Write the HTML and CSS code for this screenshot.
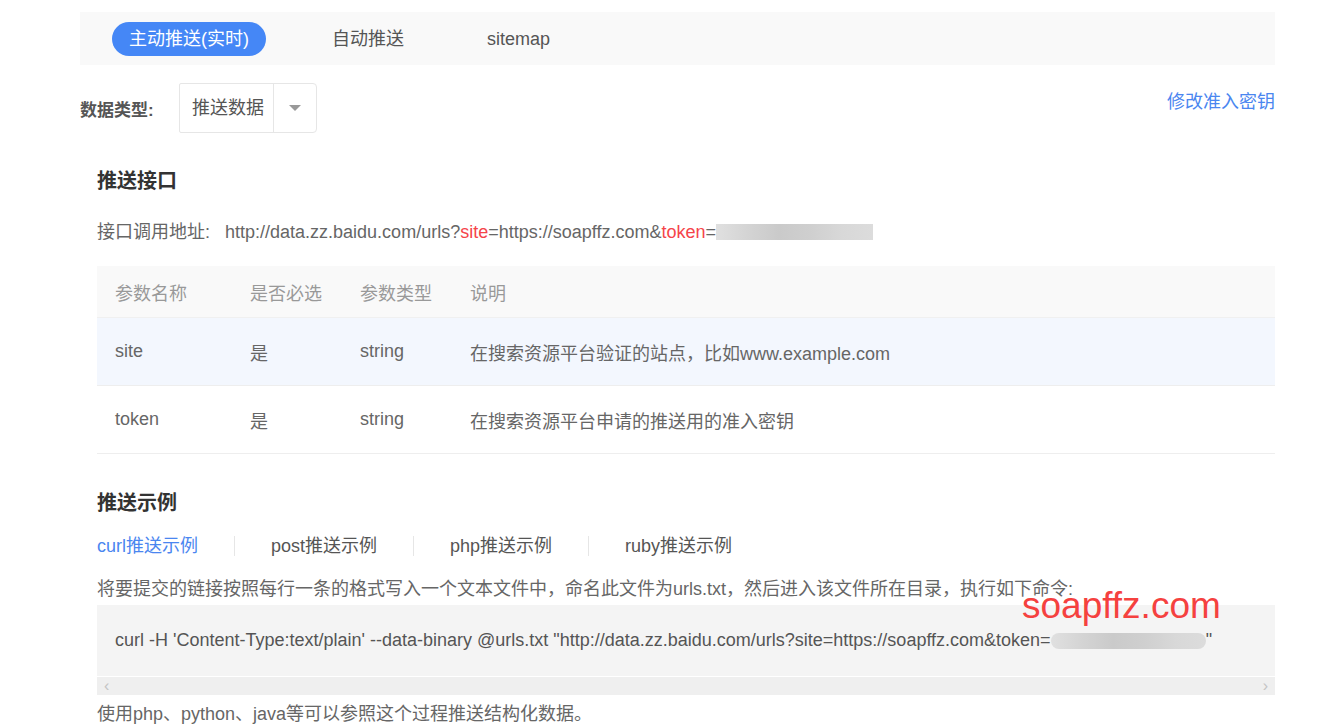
FILE: index.html
```html
<!DOCTYPE html>
<html lang="zh-CN">
<head>
<meta charset="utf-8">
<title>主动推送</title>
<link rel="stylesheet" href="styles.css">
</head>
<body>
<div class="page">
  <div class="topbar">
    <span class="top-tab active">主动推送(实时)</span>
    <span class="top-tab">自动推送</span>
    <span class="top-tab">sitemap</span>
  </div>

  <div class="type-row">
    <div class="type-left">
      <span class="type-label">数据类型:</span>
      <div class="select">
        <span class="select-text">推送数据</span>
        <span class="select-arrow"><span class="tri"></span></span>
      </div>
    </div>
    <a class="key-link">修改准入密钥</a>
  </div>

  <div class="section">
    <h2 class="sec-title">推送接口</h2>
    <p class="url-line">接口调用地址: <span class="url">http://data.zz.baidu.com/urls?<span class="red">site</span>=https://soapffz.com&amp;<span class="red">token</span>=<span class="mask"></span></span></p>

    <div class="table">
      <div class="tr th">
        <div class="td">参数名称</div>
        <div class="td">是否必选</div>
        <div class="td">参数类型</div>
        <div class="td">说明</div>
      </div>
      <div class="tr hl">
        <div class="td">site</div>
        <div class="td">是</div>
        <div class="td">string</div>
        <div class="td">在搜索资源平台验证的站点，比如www.example.com</div>
      </div>
      <div class="tr">
        <div class="td">token</div>
        <div class="td">是</div>
        <div class="td">string</div>
        <div class="td">在搜索资源平台申请的推送用的准入密钥</div>
      </div>
    </div>

    <h2 class="sec-title sec2">推送示例</h2>
    <div class="code-tabs">
      <span class="ctab on">curl推送示例</span>
      <span class="ctab">post推送示例</span>
      <span class="ctab">php推送示例</span>
      <span class="ctab">ruby推送示例</span>
    </div>
    <p class="desc">将要提交的链接按照每行一条的格式写入一个文本文件中，命名此文件为urls.txt，然后进入该文件所在目录，执行如下命令:</p>
    <div class="code">
      <div class="code-line">curl -H 'Content-Type:text/plain' --data-binary @urls.txt "http://data.zz.baidu.com/urls?site=https://soapffz.com&amp;token=<span class="mask mask2"></span>"</div>
      <div class="scrollbar">
        <span class="sarrow">&#8249;</span>
        <span class="sarrow">&#8250;</span>
      </div>
    </div>
    <p class="desc last">使用php、python、java等可以参照这个过程推送结构化数据。</p>
  </div>
  <div class="watermark">soapffz.com</div>
</div>
</body>
</html>
```
FILE: styles.css
```css
* { box-sizing: border-box; }
html, body { margin: 0; padding: 0; background: #fff; }
body {
  font-family: "Liberation Sans", "Noto Sans CJK SC", sans-serif;
  font-size: 18px;
  color: #666;
}
.page {
  position: relative;
  margin-left: 80px;
  width: 1195px;
  padding-top: 12px;
}
.topbar {
  height: 53px;
  background: #f9f9f9;
  display: flex;
  align-items: center;
  padding-left: 32px;
  gap: 49px;
}
.top-tab {
  height: 34px;
  line-height: 34px;
  padding: 0 17px;
  border-radius: 17px;
  color: #555;
  font-size: 18px;
}
.top-tab.active {
  background: #4587f6;
  color: #fff;
}
.type-row {
  margin-top: 18px;
  display: flex;
  justify-content: space-between;
  align-items: flex-start;
}
.type-left {
  display: flex;
  align-items: center;
}
.type-label {
  font-weight: bold;
  color: #555;
  width: 99px;
  font-size: 17px;
  padding-top: 1px;
}
.select {
  display: flex;
  height: 50px;
  width: 138px;
  border: 1px solid #e6e6e6;
  border-radius: 2px 4px 4px 2px;
}
.select-text {
  width: 94px;
  padding-left: 12px;
  line-height: 48px;
  overflow: hidden;
  white-space: nowrap;
  color: #555;
  border-right: 1px solid #e6e6e6;
}
.select-arrow {
  flex: 1;
  display: flex;
  align-items: center;
  justify-content: center;
}
.tri {
  width: 0; height: 0;
  border-left: 6px solid transparent;
  border-right: 6px solid transparent;
  border-top: 6px solid #999;
}
.key-link {
  color: #4a86f0;
  line-height: 24px;
  margin-top: 7px;
  cursor: pointer;
}
.section {
  padding-left: 17px;
}
.sec-title {
  margin: 34px 0 0;
  font-size: 20px;
  line-height: 28px;
  color: #333;
  font-weight: bold;
}
.url-line {
  margin: 25px 0 0;
  line-height: 24px;
}
.url { margin-left: 10px; }
.red { color: #f5444a; }
.mask {
  display: inline-block;
  width: 157px;
  height: 16px;
  vertical-align: -2px;
  background: linear-gradient(90deg, #e0e0e0 0%, #d4d4d4 20%, #cacaca 40%, #cfcfcf 60%, #d8d8d8 80%, #dcdcdc 100%);
}
.table {
  margin-top: 22px;
}
.tr {
  display: grid;
  grid-template-columns: 135px 110px 110px 1fr;
  height: 68px;
  align-items: center;
  border-bottom: 1px solid #eee;
}
.tr.th {
  height: 52px;
  background: #f9f9f9;
  color: #999;
  border-bottom: 1px solid #f0f0f0;
}
.tr.hl { background: #f3f7fe; }
.td {
  padding-left: 18px;
  white-space: nowrap;
}
.sec2 { margin-top: 35px; }
.code-tabs {
  margin-top: 19px;
  display: flex;
  align-items: center;
  line-height: 24px;
}
.ctab {
  padding: 0 36px;
  border-left: 1px solid #e6e6e6;
  line-height: 20px;
  color: #555;
}
.ctab:first-child { padding-left: 0; border-left: none; }
.ctab.on { color: #4a86f0; }
.desc {
  margin: 21px 0 0;
  line-height: 24px;
}
.code {
  margin-top: 4px;
  background: #f4f4f4;
}
.code-line {
  height: 71px;
  line-height: 71px;
  padding-left: 18px;
  white-space: nowrap;
  overflow: hidden;
  color: #555;
}
.mask2 {
  width: 155px;
  border-radius: 8px;
  vertical-align: -3px;
}
.scrollbar {
  height: 19px;
  border-top: 1px solid #fff;
  background: #efefef;
  display: flex;
  justify-content: space-between;
  align-items: center;
  padding: 0 7px 0 7px;
  color: #c4c4c4;
  font-size: 16px;
  line-height: 18px;
}
.desc.last {
  margin-top: 7px;
}
.watermark {
  position: absolute;
  left: 942px;
  top: 584px;
  font-family: "Liberation Sans", sans-serif;
  font-size: 37px;
  color: #f5413f;
  line-height: 44px;
}
```
